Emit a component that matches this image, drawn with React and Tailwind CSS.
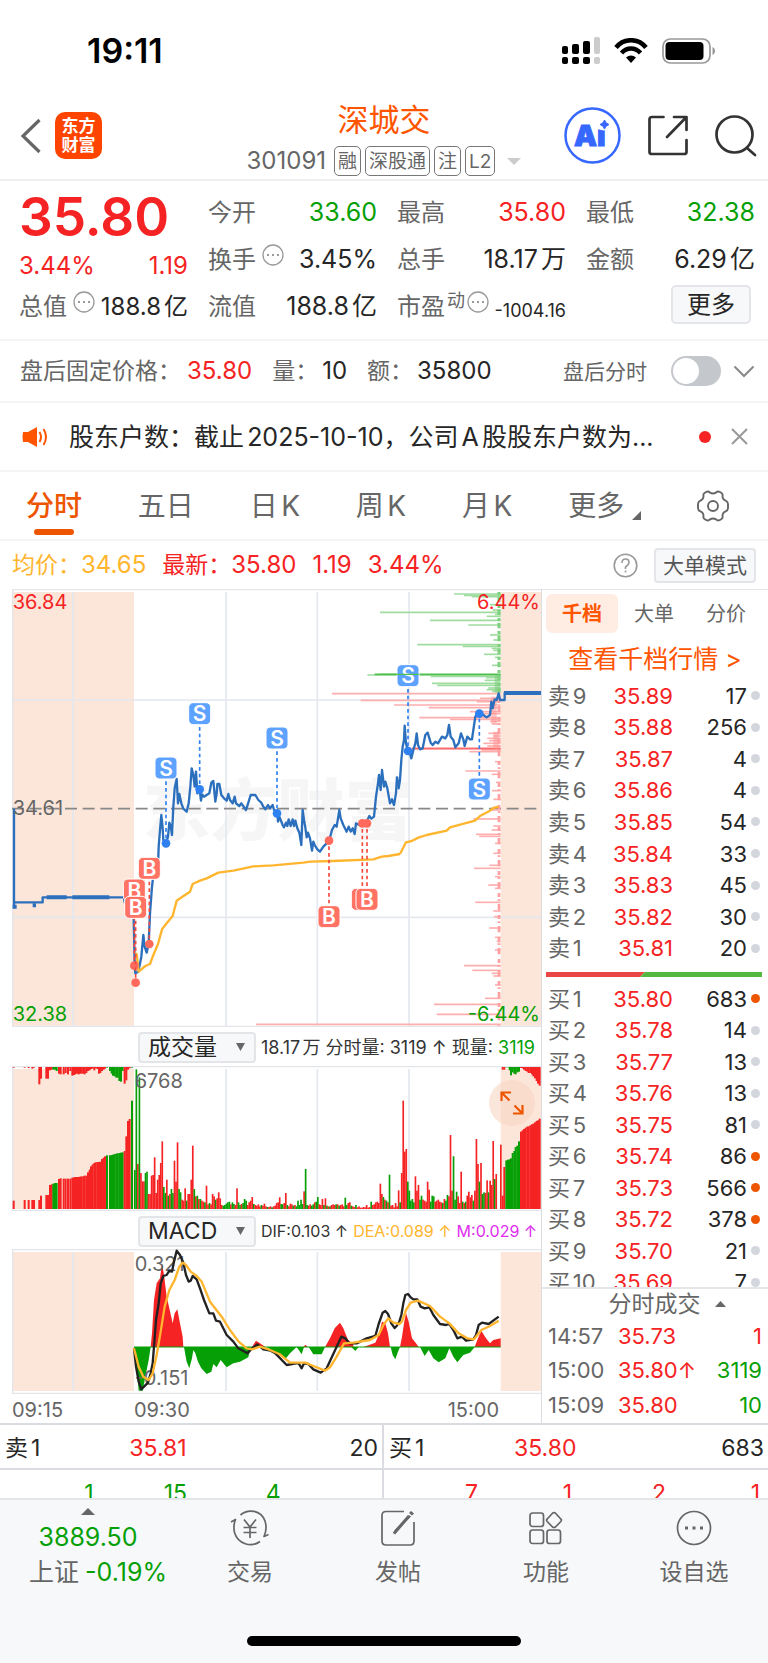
import { useState } from 'react';

const RED = '#f52323';
const GREEN = '#06a006';

const QUOTE_COLUMNS = [
  [
    { label: '今开', value: '33.60', color: 'text-[#06a006]' },
    { label: '换手', value: '3.45%', color: 'text-[#262626]', hint: true },
    { label: '流值', value: '188.8亿', color: 'text-[#262626]' },
  ],
  [
    { label: '最高', value: '35.80', color: 'text-[#f52323]' },
    { label: '总手', value: '18.17万', color: 'text-[#262626]' },
    { label: '市盈', sup: '动', value: '-1004.16', color: 'text-[#262626]', hint: true, small: true },
  ],
  [
    { label: '最低', value: '32.38', color: 'text-[#06a006]' },
    { label: '金额', value: '6.29亿', color: 'text-[#262626]' },
  ],
];

const ASKS = [
  ['卖9', '35.89', 17], ['卖8', '35.88', 256], ['卖7', '35.87', 4],
  ['卖6', '35.86', 4], ['卖5', '35.85', 54], ['卖4', '35.84', 33],
  ['卖3', '35.83', 45], ['卖2', '35.82', 30], ['卖1', '35.81', 20],
];

const BIDS = [
  ['买1', '35.80', 683, true], ['买2', '35.78', 14], ['买3', '35.77', 13],
  ['买4', '35.76', 13], ['买5', '35.75', 81], ['买6', '35.74', 86, true],
  ['买7', '35.73', 566, true], ['买8', '35.72', 378, true], ['买9', '35.70', 21],
  ['买10', '35.69', 7],
];

const TRADES = [
  { time: '14:57', price: '35.73', qty: '1', color: 'text-[#f52323]' },
  { time: '15:00', price: '35.80↑', qty: '3119', color: 'text-[#06a006]' },
  { time: '15:09', price: '35.80', qty: '10', color: 'text-[#06a006]' },
];

// Price line before and after 14:00, in chart units
const PRICE_A = '372,952 374,967 400,967 404,1150 406,1180 415,1175 424,1130 430,1065 434,1100 440,1118 446,1090 450,1000 456,920 462,868 468,850 474,860 476,800 480,750 484,705 488,745 490,780 498,790 504,770 508,728 512,738 516,765 520,680 524,625 530,597 534,670 538,642 544,670 550,686 560,695 566,670 571,620 575,565 580,585 584,620 588,575 592,640 598,622 603,662 606,643 612,650 628,640 634,608 640,603 646,665 650,640 652,612 658,612 664,645 672,655 680,662 685,642 690,660 698,670 704,650 708,670 718,678 724,670 738,690 746,665 752,645 766,645 775,660 784,668 790,680 796,688 804,675 810,685 818,675 822,690 832,700 834,725 838,710 848,735 852,742 858,728 862,738 866,718 872,738 878,718 882,738 886,722 892,745 898,758 904,795 908,690 912,720 916,742 920,772 924,758 930,775 936,812 940,785 944,795 952,808 960,815 970,800 980,790 988,780 996,750 1004,735 1010,740 1018,690 1022,715 1030,735 1040,755 1046,740 1052,755 1058,745 1064,762 1068,730 1078,735 1088,730 1100,725 1108,708 1114,716 1122,710 1128,650 1134,610 1137,585 1142,630 1146,570 1152,620 1156,605 1162,625 1170,670 1176,658 1182,675 1188,640 1191,590';
const PRICE_B = '51,590 56,625 60,600 64,540 68,500 72,480 74,437 78,490 84,513 90,520 94,535 100,510 106,490 110,460 114,495 120,508 128,505 136,465 143,458 152,488 158,495 166,485 174,490 186,470 196,475 202,465 207,435 212,470 220,480 226,502 236,490 243,460 250,478 254,498 262,470 270,478 276,478 280,450 286,410 290,402 298,400 310,405 320,412 330,405 334,365 338,385 344,358 350,360 356,340 360,360 374,360 374,339 484,339';
const AVG_A = '406,1120 410,1122 416,1175 436,1158 450,1152 460,1125 474,1092 486,1048 500,1030 518,1008 530,962 545,952 570,935 578,912 600,902 620,895 655,878 700,872 760,859 820,856 910,848 930,845 1000,843 1120,838 1145,830 1165,828 1200,822';
const AVG_B = '60,822 78,787 95,783 115,773 140,765 200,752 210,742 285,722 300,708 330,692 340,684 356,680';

// [y, left end] of the price distribution bars
const DIST_GREEN = [
  [42, 222], [46, 252], [50, 275], [74, 330], [90, 338], [97, 0], [103, 345], [109, 320], [121, 150], [135, 265], [165, 330], [180, 340],
  [194, 112], [199, 248], [205, 335], [211, 340], [223, 312], [232, 345], [256, 336], [285, -38], [289, 152], [293, 318], [301, 314],
  [310, 156], [316, 172], [324, 325], [329, 320], [334, 336],
];
const DIST_RED = [
  [341, -144], [355, 300], [361, -58], [365, 290], [375, 42], [383, 146], [395, 270], [401, 290], [413, 118], [418, 210], [424, 330], [432, 335],
  [460, 325], [468, 340], [475, 322], [482, 328], [490, 310], [498, 322], [505, 95], [510, 305], [515, 268], [545, 345], [573, 256], [583, 335], [607, 348], [632, 336], [658, 340],
  [690, 335], [717, 280], [738, 340], [750, 335], [763, 288], [769, 298], [790, 345], [820, 340], [856, 328], [865, 282], [890, 345],
  [915, 325], [925, 345], [967, 286], [993, 340], [1010, 342], [1044, 328], [1072, 345], [1085, 350], [1110, 345], [1157, 252], [1171, 277], [1180, 335], [1188, 340],
  [1215, 345], [1255, 315], [1273, 162], [1303, 170], [1333, -372],
];

const MARKERS = [
  { type: 'S', x: 498, y: 564, dot: 790 },
  { type: 'S', x: 599, y: 401, dot: 628 },
  { type: 'S', x: 831, y: 474, dot: 700 },
  { type: 'S', x: 1224, y: 287, dot: 513 },
  { type: 'S', x: 1438, y: 627, dot: 401 },
  { type: 'B', x: 403, y: 930, dot: 1157 },
  { type: 'B', x: 407, y: 982, dot: 1208 },
  { type: 'B', x: 448, y: 865, dot: 1092 },
  { type: 'B', x: 987, y: 1010, dot: 782 },
  { type: 'B', x: 1087, y: 958, dot: 730 },
  { type: 'B', x: 1101, y: 958, dot: 730 },
];

// Minute volumes, negative = green
const VOLUME = [
  -117, -419, 135, -395, 108, 83, 83, -108, -112, 45, 45, 100, 102, 155, 48, 88, 102, 138, 203, -66, -48, 88, -40, 45, -60, -48, 145, 82, 200, -60,
  -50, 28, 25, 62, -25, 45, 45, 88, 190, -60, 38, -40, 30, -30, 25, 22, -20, 70, 14, -18, 14, 45, 38, -28, 32, 50, 32, 12, -10, -12,
  -16, -20, -22, 14, -20, -15, 12, 62, -20, -12, 15, -18, -30, -25, 12, 20, 25, 36, -15, 12, 10, 14, 8, -12, 10, 16, 8, -6, 6, 8,
  -5, 8, 10, 18, 20, 35, -15, -14, 18, 48, -12, 8, 16, 14, -10, 12, -8, -25, -12, -28, -15, 53, -120, -12, 10, 14, -10, -14, 20, -22,
  -36, 14, 12, 30, -12, 32, -10, 8, -8, 12, 14, 12, -14, 14, -10, 12, 14, 8, -34, -12, 18, 20, -10, 8, 6, -12, 5, 8, 4, 4,
  6, 5, 12, 4, 6, -22, 12, 14, 20, 22, 18, 76, 45, -36, 28, -25, 20, -103, 10, 12, 5, 18, 8, 56, -20, 108, 325, 172, 180, -82,
  -55, -25, -30, -20, 98, 55, 72, -28, -40, 28, 25, 22, 82, 58, -22, -40, -38, 22, 25, 28, 22, 20, -18, 30, -25, -42, 38, 222, 55, -158,
  -28, -52, 38, 18, 112, -22, 18, -22, 40, 52, 35, 42, -25, 55, 210, 135, -82, 138, -45, -50, 48, 86, -50, 85, 72, 204, -90, 105, 0, 0, 193,
];

// Call auction bars: [x, height, depth of the unmatched bar on top]
const AUCTION = [
  [40, 25, 2], [73, 27, 2], [85, 27, 3], [96, 27, 5], [101, 27, 2], [117, 27, 52], [122, 40, 35], [138, 42, 35], [143, 42, 35],
  [149, 72, 10], [154, 74, 8], [159, -76, -8], [164, -78, -8], [169, -78, -12], [176, 90, 20], [181, 92, 22], [190, 91, 22], [196, 91, 18],
  [203, 91, 22], [210, 91, 12], [216, 94, 26], [221, 95, 24], [225, 96, 22], [230, 96, 20], [235, 96, 22], [239, 97, 20], [244, 98, 20],
  [249, 98, 20], [253, 100, 22], [258, 100, 18], [263, 110, 12], [268, 118, 10], [272, 128, 6], [277, 134, 5], [282, 138, 10], [286, 140, 4],
  [291, 141, 6], [296, 141, 20], [300, 142, 18], [305, 150, 12], [310, 154, 8], [314, 158, 5], [320, -161, -2], [329, -161, -12],
  [334, -162, -20], [338, -163, -26], [343, -165, -28], [348, -166, -32], [352, -167, -32], [357, -168, -42], [362, -169, -44],
  [367, -170, -12], [373, 174, 50], [378, 218, 40], [383, 264, 8], [388, 270, 4], [395, -325, -2],
  [1507, 40, 8], [1512, 126, 8], [1518, -146, -1], [1523, -148, -1], [1528, -149, -10], [1532, -152, -25], [1537, -168, -16], [1542, -174, -20],
  [1546, -186, -22], [1551, -190, -16], [1556, -203, -14], [1562, 232, 3], [1567, 236, 4], [1571, 240, 8], [1576, 244, 12], [1581, 247, 14],
  [1585, 248, 18], [1590, 251, 18], [1595, 254, 22], [1599, 256, 28], [1604, 260, 34], [1609, 264, 42], [1613, 266, 50], [1618, 271, 56],
];

const HIST_RED = 'M452 981 456 940 462 840 470 790 480 775 486 730 492 765 500 830 508 865 518 910 524 880 532 868 540 910 548 950 550 981ZM756 981 768 962 780 970 796 981ZM910 981 916 974 924 981ZM975 981 990 955 1004 925 1020 908 1030 925 1044 960 1060 972 1060 981ZM1090 981 1126 968 1136 945 1146 905 1156 910 1164 940 1170 981ZM1200 981 1206 950 1212 910 1218 878 1226 905 1236 955 1248 970 1256 981ZM1424 981 1434 955 1444 932 1458 955 1470 970 1480 960 1502 955 1502 981Z';
const HIST_GREEN = 'M402 981 408 1020 416 1112 428 1112 436 1070 446 1020 452 981ZM552 981 560 1025 568 1045 576 1015 580 990 586 1000 594 1025 604 1045 620 1062 634 1055 640 1032 650 1042 662 1020 680 1042 700 1030 720 1025 745 1012 752 981ZM800 981 830 1000 858 1015 870 1000 890 981 905 1003 912 981ZM926 981 940 1003 965 1003 975 981ZM1054 981 1066 993 1076 981ZM1172 981 1178 1005 1186 1018 1194 995 1200 981ZM1260 981 1274 1008 1286 990 1300 1015 1316 1027 1336 1015 1348 985 1360 1010 1372 1027 1390 1005 1410 998 1424 981Z';
const DIF = '402,985 408,1040 416,1085 424,1108 432,1100 444,1088 452,1060 458,1030 462,980 468,900 476,850 482,790 490,768 500,765 508,752 516,755 522,725 530,692 540,705 550,728 558,765 566,785 572,782 578,768 590,778 600,805 612,840 628,880 640,880 648,902 660,905 680,945 700,965 715,985 742,1000 756,985 772,973 790,988 812,992 826,1000 860,1035 888,1030 896,1030 905,1045 912,1030 925,1032 940,1048 962,1058 980,1045 996,1010 1010,980 1024,950 1036,955 1048,970 1070,970 1100,955 1126,948 1136,912 1148,878 1156,873 1164,882 1174,910 1184,924 1190,918 1198,905 1204,885 1210,850 1216,825 1224,822 1232,832 1240,838 1252,838 1262,860 1274,865 1288,862 1300,885 1320,912 1338,915 1348,912 1360,930 1372,955 1386,950 1398,962 1420,958 1428,945 1436,915 1446,908 1466,912 1496,890';
const DEA = '402,985 416,1040 430,1070 446,1080 458,1060 470,1005 482,935 494,860 508,810 524,780 538,740 548,728 558,735 572,755 590,768 605,785 630,845 665,890 690,930 716,965 740,985 756,988 780,980 810,990 838,1002 870,1028 916,1028 940,1038 975,1052 990,1042 1010,1010 1032,970 1060,968 1110,960 1136,945 1150,915 1165,895 1180,908 1198,912 1206,905 1218,870 1232,848 1254,842 1290,858 1320,890 1348,910 1376,940 1402,955 1422,958 1444,930 1470,918 1496,902';

const PERIODS = ['分时', '五日', '日K', '周K', '月K'];

function StatusBar() {
  return (
    <div className="flex h-[92px] items-center justify-between pt-[10px] pr-[52px] pl-[87px]">
      <span className="text-[34px] leading-none font-semibold text-black">19:11</span>
      <div className="flex items-center gap-[14px]">
        <svg width="38" height="28" viewBox="0 0 38 28" aria-hidden="true">
          <rect x="0" y="9" width="6" height="8" rx="2" />
          <rect x="10" y="7" width="7" height="10" rx="2" />
          <rect x="21" y="4" width="7" height="13" rx="2" />
          <rect x="32" y="0" width="6" height="17" rx="2" fill="#ccc" />
          <rect x="0" y="20" width="6" height="7" rx="2" />
          <rect x="10" y="20" width="7" height="7" rx="2" />
          <rect x="21" y="20" width="7" height="7" rx="2" />
          <rect x="32" y="20" width="6" height="7" rx="2" fill="#ccc" />
        </svg>
        <svg width="34" height="26" viewBox="0 0 34 26" fill="none" stroke="#000" strokeWidth="4.6" aria-hidden="true">
          <path d="M2 9.5C10-.2 24-.2 32 9.5" />
          <path d="M7.5 15c5.5-6 13.500-6 19 0" />
          <path d="M17 25l-5-5.500c3-2.800 7-2.800 10 0z" fill="#000" stroke="none" />
        </svg>
        <svg width="54" height="26" viewBox="0 0 54 26" aria-hidden="true">
          <rect x="1" y="1" width="47" height="24" rx="7.500" fill="none" stroke="#999" strokeWidth="1.700" />
          <rect x="3.500" y="4" width="38" height="18" rx="4" />
          <path d="M50.500 9c3.500 1.500 3.500 6.500 0 8z" fill="#999" />
        </svg>
      </div>
    </div>
  );
}

function Header() {
  const tag = 'flex h-[30px] items-center rounded-[5px] border border-[#777] px-[3px] text-[19px] leading-none';
  return (
    <header className="grid h-[89px] grid-cols-[1fr_auto_1fr] items-center border-b-2 border-[#efefef] pr-[11px] pl-[11px]">
      <div className="flex items-center gap-[14px] pl-[9px]">
        <button aria-label="返回">
          <svg width="21" height="36" viewBox="0 0 21 36" fill="none" stroke="#666" strokeWidth="3.200">
            <path d="M19.500 2 3 18l16.500 16" />
          </svg>
        </button>
        <div className="flex h-[47px] w-[47px] flex-col items-center justify-center rounded-[10px] bg-[#ff4400] text-[17px] leading-[19px] font-bold text-white">
          <span>东方</span>
          <span>财富</span>
        </div>
      </div>
      <div className="flex flex-col items-center gap-2 self-end pb-[3px]">
        <h1 className="text-[31px] leading-[36px] text-[#ff5500]">深城交</h1>
        <div className="flex items-center gap-1 text-[#666]">
          <span className="mr-1 text-[24px] leading-none">301091</span>
          <span className={tag}>融</span>
          <span className={tag}>深股通</span>
          <span className={tag}>注</span>
          <span className={tag}>L2</span>
          <svg className="ml-2" width="14" height="7" viewBox="0 0 14 7" fill="#ccc"><path d="M0 0h14L7 7z" /></svg>
        </div>
      </div>
      <div className="flex items-center justify-end gap-[27px]">
        <button aria-label="AI 助手">
          <svg width="57" height="57" viewBox="0 0 57 57">
            <circle cx="28.500" cy="28.500" r="27" fill="none" stroke="#3667ff" strokeWidth="2.500" />
            <text x="10" y="39" fontSize="29" fontWeight="900" fill="#3667ff" stroke="#3667ff" strokeWidth="1">Ai</text>
            <circle cx="39.500" cy="17" r="6.500" fill="#fff" />
            <path d="M40.500 13q1 3.500 4.500 4.500q-3.500 1-4.500 4.500q-1-3.500-4.500-4.500q3.500-1 4.500-4.500z" fill="#3667ff" stroke="#3667ff" />
          </svg>
        </button>
        <button aria-label="分享">
          <svg width="40" height="41" viewBox="0 0 40 41" fill="none" stroke="#333" strokeWidth="2.700" strokeLinecap="round" strokeLinejoin="round">
            <path d="M15.500 2H4Q1.500 2 1.500 4.500V37Q1.500 39 4 39H36Q38.500 39 38.500 37V25M26 2H38.500V15M38 2.500 19 22" />
          </svg>
        </button>
        <button aria-label="搜索">
          <svg width="42" height="42" viewBox="0 0 42 42" fill="none" stroke="#333" strokeWidth="2.700" strokeLinecap="round">
            <circle cx="19.500" cy="19.500" r="18" />
            <path d="M32 33l8 7" />
          </svg>
        </button>
      </div>
    </header>
  );
}

function Hint() {
  return (
    <svg className="mb-[10px] shrink-0" width="22" height="22" viewBox="0 0 22 22" fill="none" stroke="#999" strokeWidth="1.300">
      <circle cx="11" cy="11" r="10" />
      <path d="M5 11h2M10 11h2M15 11h2" strokeWidth="2" />
    </svg>
  );
}

function Quote() {
  return (
    <section className="grid grid-cols-4 gap-x-5 border-b-2 border-[#f5f5f5] pt-2 pr-[13px] pb-[9px] pl-[19px] text-[24px] leading-none">
      <div className="text-[#f52323]">
        <div className="flex h-14 items-center text-[53px] font-semibold">35.80</div>
        <div className="flex h-[42px] items-center justify-between">
          <span>3.44%</span>
          <span>1.19</span>
        </div>
        <div className="flex h-10 items-center justify-between whitespace-nowrap">
          <span className="flex items-center gap-[6px] text-[#666]">总值<Hint /></span>
          <span className="text-[#262626]">188.8亿</span>
        </div>
      </div>
      {QUOTE_COLUMNS.map((items, i) => (
        <div key={i}>
          {items.map((item) => (
            <div key={item.label} className="flex h-[47px] items-center justify-between whitespace-nowrap">
              <span className="flex items-center text-[#666]">
                {item.label}
                {item.sup && <sup className="top-0 mb-3 ml-[2px] text-[18px] leading-none">{item.sup}</sup>}
                {item.hint && <span className={item.sup ? 'ml-[2px]' : 'ml-[6px]'}><Hint /></span>}
              </span>
              <span className={`${item.color} ${item.small ? 'pt-2 text-[18px]' : 'text-[25px]'}`}>{item.value}</span>
            </div>
          ))}
          {i === 2 && (
            <div className="flex h-[43px] items-center justify-end pr-1">
              <button className="h-[39px] w-20 rounded-[5px] border-2 border-[#e3e5e9] bg-[#f7f8fa] text-[24px] leading-none text-[#262626]">更多</button>
            </div>
          )}
        </div>
      ))}
    </section>
  );
}

function AfterHours() {
  const [on, setOn] = useState(false);
  return (
    <section className="flex h-[62px] items-center border-b-2 border-[#f5f5f5] pr-[13px] pl-5 text-[23px] leading-none whitespace-nowrap text-[#666]">
      <span>盘后固定价格：</span>
      <span className="ml-[6px] text-[24px] text-[#f52323]">35.80</span>
      <span className="ml-5">量：</span>
      <span className="ml-1 text-[24px] text-[#262626]">10</span>
      <span className="ml-5">额：</span>
      <span className="ml-1 text-[24px] text-[#262626]">35800</span>
      <label className="ml-auto flex items-center gap-6 text-[21px]">
        盘后分时
        <input type="checkbox" className="peer sr-only" checked={on} onChange={() => setOn(!on)} />
        <span className="flex h-[30px] w-[50px] rounded-full bg-[#c4c7cc] p-[2px] peer-checked:justify-end peer-checked:bg-[#ff5500]">
          <span className="h-[26px] w-[26px] rounded-full bg-white" />
        </span>
      </label>
      <button className="ml-3" aria-label="展开">
        <svg width="22" height="13" viewBox="0 0 22 13" fill="none" stroke="#888" strokeWidth="2"><path d="M1.500 1.500 11 11l9.500-9.500" /></svg>
      </button>
    </section>
  );
}

function News() {
  return (
    <section className="flex h-[69px] items-center border-b-2 border-[#f5f5f5] pr-5 pl-[22px]">
      <svg width="26" height="22" viewBox="0 0 26 22" fill="none" stroke="#ff5500" strokeWidth="2" className="shrink-0">
        <path d="M1 6h5l9-5v20l-9-5H1q-1-5 0-10z" fill="#ff5500" stroke="none" />
        <path d="M17.500 6q3 5 0 10M21.500 3q5 8 0 16" />
      </svg>
      <p className="ml-[21px] min-w-0 flex-1 truncate text-[25px] leading-8 text-[#262626]">
        股东户数：截止2025-10-10，公司A股股东户数为...
      </p>
      <span className="ml-5 h-3 w-3 shrink-0 rounded-full bg-[#f52323]" />
      <button className="ml-5" aria-label="关闭">
        <svg width="17" height="17" viewBox="0 0 17 17" stroke="#999" strokeWidth="2"><path d="M1 1l15 15M16 1 1 16" /></svg>
      </button>
    </section>
  );
}

function PeriodTabs() {
  const [active, setActive] = useState('分时');
  return (
    <nav className="flex h-[69px] items-center justify-between border-b-2 border-[#f5f5f5] pr-[39px] pl-[26px] text-[28px] leading-none text-[#666]">
      {PERIODS.map((p) => (
        <button
          key={p}
          onClick={() => setActive(p)}
          className={`relative flex h-full items-center ${active === p ? 'font-medium text-[#ee5500]' : ''}`}
        >
          {p}
          {active === p && <span className="absolute bottom-[4px] left-2 h-[6px] w-10 rounded-full bg-[#ee5500]" />}
        </button>
      ))}
      <button className="flex items-end gap-2">
        更多
        <svg width="9" height="9" viewBox="0 0 9 9" fill="#666"><path d="M9 0v9H0z" /></svg>
      </button>
      <button aria-label="设置">
        <svg width="32" height="32" viewBox="0 0 32 32" fill="none" stroke="#666" strokeWidth="1.900" strokeLinejoin="round">
          <circle cx="16" cy="16" r="5" />
          <path d="M9.500 1.800Q11.500 1 13 2.600Q16 4.500 19 2.600Q20.500 1 22.500 1.800L24.500 3Q26 4 25.500 6Q25.500 9.500 29 10.800Q30.800 11.500 31 14V18Q30.800 20.500 29 21.200Q25.500 22.500 25.500 26Q26 28 24.500 29L22.500 30.200Q20.500 31 19 29.400Q16 27.500 13 29.400Q11.500 31 9.500 30.200L7.500 29Q6 28 6.500 26Q6.500 22.500 3 21.200Q1.200 20.500 1 18V14Q1.200 11.500 3 10.800Q6.500 9.500 6.500 6Q6 4 7.500 3Z" />
        </svg>
      </button>
    </nav>
  );
}

function PriceSummary() {
  return (
    <div className="flex h-[48px] items-center pr-3 pl-3 text-[24px] leading-none whitespace-nowrap text-[#f52323]">
      <span className="text-[23px] text-[#ffb52e]">均价：</span>
      <span className="text-[#ffb52e]">34.65</span>
      <span className="ml-4 text-[23px]">最新：</span>
      <span>35.80</span>
      <span className="ml-4">1.19</span>
      <span className="ml-4">3.44%</span>
      <button className="ml-auto" aria-label="说明">
        <svg width="25" height="25" viewBox="0 0 25 25" fill="none" stroke="#999" strokeWidth="1.600">
          <circle cx="12.500" cy="12.500" r="11.300" />
          <path d="M9 10q0-4 3.500-4t3.500 3.500q0 2-3.500 4.500v2M12.500 17.500v2" />
        </svg>
      </button>
      <button className="ml-4 h-[35px] w-[102px] rounded-[4px] border-2 border-[#e3e5e9] bg-[#f7f8fa] text-[21px] leading-none text-[#555]">大单模式</button>
    </div>
  );
}

function Marker({ type, x, y, dot }) {
  const color = type === 'S' ? '#2f80f0' : '#f5483c';
  const fill = type === 'S' ? '#5ea2ff' : '#ff7264';
  return (
    <g>
      <line x1={x} x2={x} y1={y} y2={dot} stroke={color} strokeWidth="5" strokeDasharray="11 9" />
      <circle cx={x} cy={dot} r="13" fill={type === 'S' ? '#2f80f0' : '#ff6a5c'} />
      <rect x={x - 33} y={y - 33} width="66" height="66" rx="14" fill={fill} stroke="#fff" strokeWidth="3" />
      <text x={x} y={y + 23} fontSize="63" fontWeight="600" fill="#fff" textAnchor="middle">{type}</text>
    </g>
  );
}

function PriceChart() {
  return (
    <svg className="block w-full" viewBox="36 27 1587 1314">
      <rect x="36" y="36" width="366" height="1301" fill="#fce6da" />
      <rect x="1502" y="36" width="121" height="1301" fill="#fce6da" />
      <text x="428" y="765" fontSize="202" fontWeight="900" fill="#f6f6f6">东方财富</text>
      <g stroke="#e4e8ef" strokeWidth="5">
        <path d="M219 36V1337M678 36V1337M952 36V1337M1227 36V1337M36 360H1623M36 1012H1623" />
        <path d="M36 29H1623M36 1339H1623M38 29V1339" strokeWidth="4" stroke="#e3e5e9" />
      </g>
      <path d="M36 686H1620" stroke="#888" strokeWidth="5" strokeDasharray="36 17" />
      <g transform="translate(1140 0)" strokeWidth="5">
        <g stroke="#9fdc9f">
          {DIST_GREEN.map(([y, x]) => <path key={y} d={`M${x} ${y}H362`} />)}
        </g>
        <path d="M-16 283H362" stroke="#4fbf4f" />
        <path d="M357 36V338" stroke="#7fd07f" strokeWidth="9" strokeDasharray="9 5 17 8" />
        <g stroke="#ffaeae">
          {DIST_RED.map(([y, x]) => <path key={y} d={`M${x} ${y}H362`} />)}
        </g>
        <path d="M95 506H362" stroke="#fa6a6a" />
        <path d="M357 345V1337" stroke="#ff9f9f" strokeWidth="8" strokeDasharray="12 7 5 9 19 14" />
        <path d="M352 285V338" stroke="#7fd07f" strokeWidth="16" opacity="0.6" />
        <path d="M342 350V430M348 455V510" stroke="#ff8f8f" strokeWidth="16" opacity="0.5" />
      </g>
      <g fill="none" stroke="#2c70bd" strokeWidth="7" strokeLinejoin="round">
        <path d="M42 686V985M42 967H128V952H374" />
        <path d="M38 980H50M98 976H108M140 952H200M217 952H328" strokeWidth="12" />
        <polyline points={PRICE_A} />
        <polyline points={PRICE_B} transform="translate(1140 0)" />
        <path d="M1512 339H1623" strokeWidth="12" />
      </g>
      <g fill="none" stroke="#ffb52e" strokeWidth="7" strokeLinejoin="round">
        <polyline points={AVG_A} />
        <polyline points={AVG_B} transform="translate(1140 0)" />
      </g>
      {MARKERS.map((m) => <Marker key={m.x} {...m} />)}
      <path d="M1140 283H1256" stroke="#4fbf4f" strokeWidth="4" />
      <g fontSize="60">
        <text x="38" y="86" fill={RED}>36.84</text>
        <text x="38" y="704" fill="#666">34.61</text>
        <text x="38" y="1322" fill={GREEN}>32.38</text>
        <text x="1620" y="86" fill={RED} textAnchor="end">6.44%</text>
        <text x="1620" y="1322" fill={GREEN} textAnchor="end">-6.44%</text>
      </g>
    </svg>
  );
}

function VolumeChart() {
  return (
    <div className="relative">
      <svg className="block w-full" viewBox="36 138 1587 435">
        <rect x="36" y="147" width="366" height="420" fill="#fce6da" />
        <rect x="1502" y="147" width="121" height="420" fill="#fce6da" />
        <path d="M219 147V567M678 147V567M952 147V567M1227 147V567" stroke="#e4e8ef" strokeWidth="5" />
        <path d="M36 140H1623M36 571H1623M38 139V571" stroke="#e3e5e9" strokeWidth="4" />
        {VOLUME.map((v, i) => (
          <rect key={i} x={402 + i * 4.575} y={567 - Math.abs(v)} width="5" height={Math.abs(v)} fill={v > 0 ? RED : GREEN} />
        ))}
        {AUCTION.map(([x, h, top]) => (
          <g key={x}>
            <rect x={x - 2} y={567 - Math.abs(h)} width="6" height={Math.abs(h)} fill={h > 0 ? RED : GREEN} />
            <rect x={x - 2} y="141" width="6" height={Math.abs(top)} fill={top > 0 ? RED : GREEN} />
          </g>
        ))}
        <text x="404" y="205" fontSize="60" fill="#666">6768</text>
      </svg>
      <button className="absolute top-[14px] right-[6px] flex h-[46px] w-[46px] items-center justify-center rounded-full bg-[#f9d5c3]/60" aria-label="全屏">
        <svg width="24" height="24" viewBox="0 0 24 24" fill="none" stroke="#ee5500" strokeWidth="2.200">
          <path d="M1.500 10V1.500H11M2 2l7.500 7.500M22.500 14v8.500H13M22 22l-7.500-7.500" />
        </svg>
      </button>
    </div>
  );
}

function MacdChart() {
  return (
    <svg className="block w-full" viewBox="36 687 1587 435">
      <rect x="36" y="696" width="366" height="417" fill="#fce6da" />
      <rect x="1502" y="696" width="121" height="417" fill="#fce6da" />
      <path d="M219 696V1113M678 696V1113M952 696V1113M1227 696V1113" stroke="#e4e8ef" strokeWidth="5" />
      <path d="M36 689H1623M36 1120H1623M38 689V1120" stroke="#e3e5e9" strokeWidth="4" />
      <path d={HIST_RED} fill={RED} />
      <path d={HIST_GREEN} fill={GREEN} />
      <path d="M402 981H1502" stroke={GREEN} strokeWidth="3" />
      <g fontSize="60" fill="#666">
        <text x="404" y="752">0.321</text>
        <text x="404" y="1095">-0.151</text>
      </g>
      <g fill="none" strokeWidth="7" strokeLinejoin="round">
        <polyline points={DIF} stroke="#222" />
        <polyline points={DEA} stroke="#ffb52e" />
      </g>
    </svg>
  );
}

function IndicatorSelect({ label, options }) {
  return (
    <div className="relative ml-[126px] shrink-0">
      <select
        aria-label={label}
        className="block h-[31px] w-[118px] appearance-none rounded-[4px] border-2 border-[#e3e5e9] bg-[#f7f8fa] pl-2 text-[23px] leading-none text-[#262626]"
      >
        {options.map((o) => <option key={o}>{o}</option>)}
      </select>
      <svg className="pointer-events-none absolute top-[11px] right-[11px]" width="9" height="8" viewBox="0 0 9 8" fill="#666"><path d="M0 0h9L4.500 8z" /></svg>
    </div>
  );
}

function Charts() {
  return (
    <div className="min-w-0 flex-1 border-r border-[#dadce2] pl-3">
      <PriceChart />
      <div className="flex h-[39px] items-center gap-[5px] pt-[2px] text-[18px] leading-none whitespace-nowrap text-[#333]">
        <IndicatorSelect label="副图一" options={['成交量', '成交额']} />
        <span>18.17万 分时量: 3119 ↑ 现量: <span className="text-[#06a006]">3119</span></span>
      </div>
      <VolumeChart />
      <div className="flex h-[38px] items-center gap-[5px] pt-[2px] text-[16px] leading-none whitespace-nowrap text-[#333]">
        <IndicatorSelect label="副图二" options={['MACD', 'KDJ']} />
        <span>DIF:0.103 ↑</span>
        <span className="text-[#ffb52e]">DEA:0.089 ↑</span>
        <span className="text-[#e02df0]">M:0.029 ↑</span>
      </div>
      <MacdChart />
      <div className="flex h-[29px] items-center pt-[2px] pr-[42px] text-[20px] leading-none text-[#666]">
        <span className="w-[122px]">09:15</span>
        <span>09:30</span>
        <span className="ml-auto">15:00</span>
      </div>
    </div>
  );
}

function DepthTable({ rows, height, label }) {
  return (
    <table className={`w-full table-fixed ${height}`} aria-label={label}>
      <tbody>
        {rows.map(([level, price, qty, big]) => (
          <tr key={level}>
            <td className="w-[52px] p-0 whitespace-nowrap text-[#666]">{level}</td>
            <td className="w-[73px] p-0 text-right text-[#f52323]">{price}</td>
            <td className="p-0">
              <div className="flex items-center justify-end gap-1 text-[#262626]">
                {qty}
                <span className={`h-[9px] w-[9px] rounded-full ${big ? 'bg-[#ee5500]' : 'bg-[#d3d6dc]'}`} />
              </div>
            </td>
          </tr>
        ))}
      </tbody>
    </table>
  );
}

function OrderBook() {
  const [tab, setTab] = useState('千档');
  return (
    <aside className="flex w-[226px] shrink-0 flex-col border-t border-[#e3e5e9] text-[22px] leading-none">
      <div className="flex pt-1 pl-1">
        {['千档', '大单', '分价'].map((t) => (
          <button
            key={t}
            onClick={() => setTab(t)}
            className={`h-[39px] w-[72px] rounded-[6px] text-[20px] leading-none ${tab === t ? 'bg-[#ffece3] font-bold text-[#ff5500]' : 'text-[#666]'}`}
          >
            {t}
          </button>
        ))}
      </div>
      <a href="#depth" className="flex h-[47px] items-center justify-center pt-[6px] text-[25px] text-[#ff5500]">查看千档行情 &gt;</a>
      <div className="pr-2 pl-[6px]"><DepthTable rows={ASKS} height="h-[284px]" label="卖盘" /></div>
      <svg className="mt-2 mb-[6px] ml-1 block h-[5px] w-[216px] shrink-0" viewBox="0 0 216 5" preserveAspectRatio="none">
        <path d="M0 0H99L94 5H0z" fill="#ea4646" />
        <path d="M99 0H216V5H94z" fill="#55b840" />
      </svg>
      <div className="h-[304px] overflow-hidden pr-2 pl-[6px]"><DepthTable rows={BIDS} height="h-[315px]" label="买盘" /></div>
      <button className="flex h-[32px] items-center justify-center gap-[14px] border-t-2 border-[#e3e5e9] pl-6 text-[23px] leading-none text-[#666]">
        分时成交
        <svg width="11" height="6" viewBox="0 0 11 6" fill="#666"><path d="M0 6h11L5.500 0z" /></svg>
      </button>
      <table className="mr-[6px] ml-[6px] h-[103px] table-fixed" aria-label="分时成交">
        <tbody>
          {TRADES.map((t) => (
            <tr key={t.time}>
              <td className="w-[70px] p-0 text-[#666]">{t.time}</td>
              <td className="p-0 whitespace-nowrap text-[#f52323]">{t.price}</td>
              <td className={`p-0 text-right ${t.color}`}>{t.qty}</td>
            </tr>
          ))}
        </tbody>
      </table>
    </aside>
  );
}

function QueueHalf({ level, price, qty, queue, color }) {
  return (
    <div className="text-[23px] leading-none text-[#262626]">
      <div className="grid h-[45px] grid-cols-3 items-center border-b-2 border-[#dadce2] pt-1 pr-1 pl-[5px]">
        <span>{level}</span>
        <span className="text-[#f52323]">{price}</span>
        <span className="text-right">{qty}</span>
      </div>
      <div className={`grid h-[28px] grid-cols-4 overflow-hidden pt-3 pr-2 text-right ${color}`}>
        {queue.map((q, i) => <span key={i}>{q}</span>)}
      </div>
    </div>
  );
}

const iconProps = { width: 40, height: 38, viewBox: '0 0 40 38', fill: 'none', stroke: '#666', strokeWidth: 1.7, strokeLinejoin: 'round', 'aria-hidden': true };

const NAV_ITEMS = [
  {
    label: '交易',
    icon: (
      <svg {...iconProps}>
        <path d="M10.500 6C18-.5 31 1 35 12q2.500 8-1 15.500l4.500-2M30 32.500C21 39 8 35 4.500 23.500Q3 16.500 5.500 10.500L1 13" />
        <path d="M14 10.500l6 7.500 6-7.500M13.500 18.500h13M13.500 23.500h13M20 18v11" />
      </svg>
    ),
  },
  {
    label: '发帖',
    icon: (
      <svg {...iconProps}>
        <path d="M26 2.500H8Q4 2.500 4 6.500V32Q4 36 8 36H32Q36 36 36 32V13" />
        <path d="M33 7.500 18.500 22l-3 3.500 1.200-4.500L31 6zM33 2l3 2.500-2 2-3-2.500z" fill="#666" stroke="none" />
        <path d="M31 7 16 24.500" strokeWidth="3" />
      </svg>
    ),
  },
  {
    label: '功能',
    icon: (
      <svg {...iconProps}>
        <rect x="4" y="4" width="13.500" height="13.500" rx="2.500" />
        <rect x="4" y="21" width="13.500" height="13.500" rx="2.500" />
        <rect x="21" y="21" width="13.500" height="13.500" rx="2.500" />
        <path d="M26.500 4.200Q28 3 29.500 4.200L34.800 10Q36 11 34.800 12.500L29.500 18Q28 19 26.500 18L21.200 12.500Q20 11 21.200 10z" />
      </svg>
    ),
  },
  {
    label: '设自选',
    icon: (
      <svg {...iconProps}>
        <circle cx="20" cy="19" r="16.500" />
        <path d="M11 19h3M18.500 19h3M26 19h3" strokeWidth="3" />
      </svg>
    ),
  },
];

function BottomBar() {
  return (
    <footer className="flex h-[165px] flex-col justify-between border-t-2 border-[#e3e5e9] bg-[#f6f8fa] pb-[17px]">
      <div className="flex text-[23px] leading-none text-[#666]">
        <button className="flex w-[176px] flex-col items-center pt-2">
          <svg width="14" height="7" viewBox="0 0 14 7" fill="#666"><path d="M0 7h14L7 0z" /></svg>
          <span className="mt-[10px] text-[25px] leading-6 text-[#06a006]">3889.50</span>
          <span className="mt-[11px] flex items-center gap-[6px] pl-5 text-[25px] leading-6 whitespace-nowrap">
            上证<span className="text-[#06a006]">-0.19%</span>
          </span>
        </button>
        {NAV_ITEMS.map((item) => (
          <button key={item.label} className="flex flex-1 flex-col items-center pt-[9px]">
            {item.icon}
            <span className="mt-[13px] leading-6">{item.label}</span>
          </button>
        ))}
      </div>
      <div className="mx-auto h-[10px] w-[274px] rounded-full bg-black" />
    </footer>
  );
}

export default function App() {
  return (
    <div className="min-h-screen overflow-hidden bg-white font-['Inter','Noto_Sans_CJK_SC',sans-serif] [text-autospace:normal]">
      <StatusBar />
      <Header />
      <Quote />
      <AfterHours />
      <News />
      <PeriodTabs />
      <PriceSummary />
      <main className="flex">
        <Charts />
        <OrderBook />
      </main>
      <section className="grid grid-cols-2 divide-x-2 divide-[#dadce2] border-t-2 border-[#dadce2]">
        <QueueHalf level="卖1" price="35.81" qty="20" queue={['1', '15', '4', '']} color="text-[#06a006]" />
        <QueueHalf level="买1" price="35.80" qty="683" queue={['7', '1', '2', '1']} color="text-[#f52323]" />
      </section>
      <BottomBar />
    </div>
  );
}
